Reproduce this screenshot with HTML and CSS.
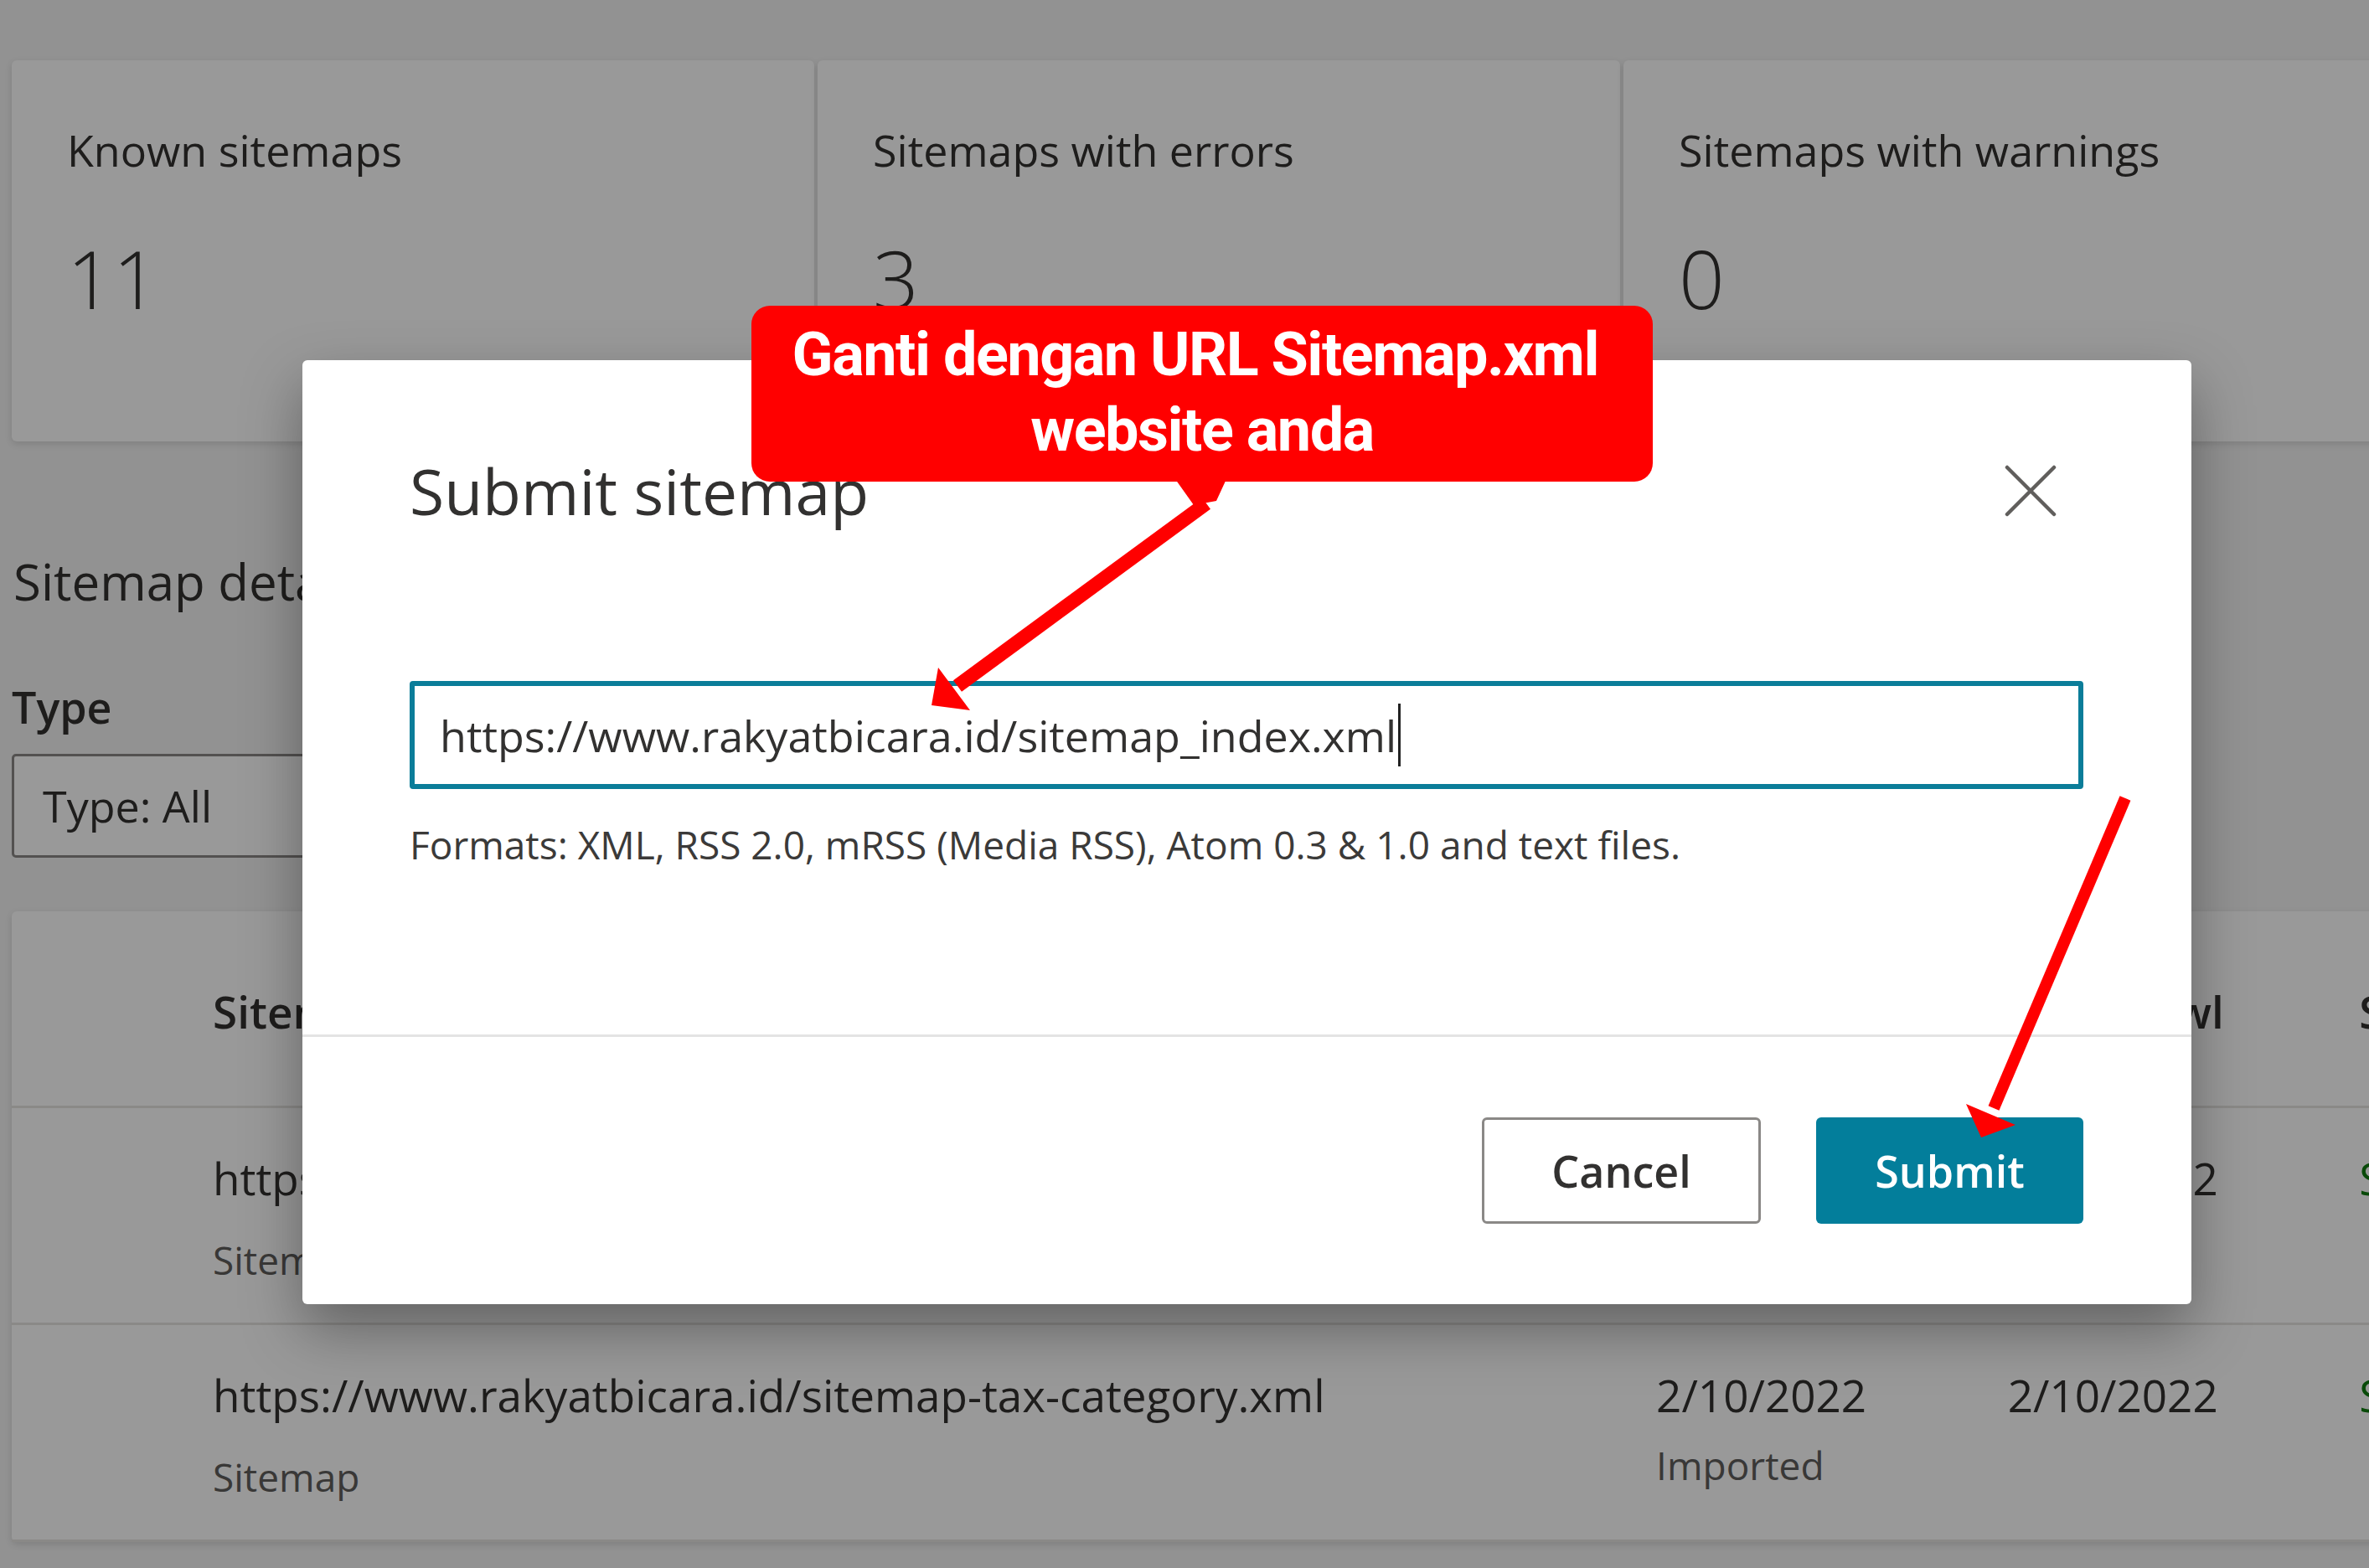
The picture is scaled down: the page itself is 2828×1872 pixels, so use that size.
FILE: index.html
```html
<!DOCTYPE html>
<html lang="en">
<head>
    <meta charset="UTF-8">
    <title>Sitemaps</title>
    <link rel="stylesheet" href="styles.css">
</head>
<body>
    <div class="page">
        <!-- Ringkasan sitemap -->
        <div class="summary">
            <div class="stat-card">
                <div class="stat-label">Known sitemaps</div>
                <div class="stat-value">11</div>
            </div>
            <div class="stat-card">
                <div class="stat-label">Sitemaps with errors</div>
                <div class="stat-value">3</div>
            </div>
            <div class="stat-card">
                <div class="stat-label">Sitemaps with warnings</div>
                <div class="stat-value">0</div>
            </div>
        </div>

        <h2 class="section-title">Sitemap details</h2>

        <div class="filter">
            <div class="filter-label">Type</div>
            <div class="dropdown">Type: All</div>
        </div>

        <!-- Tabel sitemap -->
        <div class="table-card">
            <div class="table-row table-head">
                <div class="col-url">Sitemap</div>
                <div class="col-date">Last submit</div>
                <div class="col-date">Last crawl</div>
                <div class="col-status">Status</div>
            </div>
            <div class="table-row">
                <div class="col-url">
                    <div class="cell-main">https://www.rakyatbicara.id/sitemap_index.xml</div>
                    <div class="cell-sub">Sitemap index</div>
                </div>
                <div class="col-date"><div class="cell-main">2/10/2022</div></div>
                <div class="col-date"><div class="cell-main">2/10/2022</div></div>
                <div class="col-status"><div class="cell-main ok">Success</div></div>
            </div>
            <div class="table-row">
                <div class="col-url">
                    <div class="cell-main">https://www.rakyatbicara.id/sitemap-tax-category.xml</div>
                    <div class="cell-sub">Sitemap</div>
                </div>
                <div class="col-date">
                    <div class="cell-main">2/10/2022</div>
                    <div class="cell-sub small">Imported</div>
                </div>
                <div class="col-date"><div class="cell-main">2/10/2022</div></div>
                <div class="col-status"><div class="cell-main ok">Success</div></div>
            </div>
        </div>
    </div>

    <div class="overlay"></div>

    <!-- Dialog submit sitemap -->
    <div class="dialog">
        <div class="dialog-head">
            <div class="dialog-title">Submit sitemap</div>
            <div class="close-btn">
                <svg width="62" height="62" viewBox="0 0 62 62">
                    <path d="M3 3 L59 59 M59 3 L3 59" stroke="#605e5c" stroke-width="4.5" stroke-linecap="round" fill="none"/>
                </svg>
            </div>
        </div>
        <div class="dialog-body">
            <div class="url-field"><span>https://www.rakyatbicara.id/sitemap_index.xml</span><span class="caret"></span></div>
            <div class="help-text">Formats: XML, RSS 2.0, mRSS (Media RSS), Atom 0.3 &amp; 1.0 and text files.</div>
        </div>
        <div class="dialog-foot">
            <button class="btn btn-cancel">Cancel</button>
            <button class="btn btn-submit">Submit</button>
        </div>
    </div>

    <!-- Catatan merah -->
    <div class="callout">Ganti dengan URL Sitemap.xml&nbsp;<br>website anda</div>

    <svg class="marks" width="2828" height="1872" viewBox="0 0 2828 1872">
        <polygon points="1403,572 1464,572 1452,598 1425,603" fill="#ff0000"/>
        <line x1="1440" y1="601" x2="1143" y2="819" stroke="#ff0000" stroke-width="17"/>
        <polygon points="1112,842 1120,797 1158,848" fill="#ff0000"/>
        <line x1="2537" y1="953" x2="2380" y2="1323" stroke="#ff0000" stroke-width="14"/>
        <polygon points="2365,1358 2347,1318 2406,1343" fill="#ff0000"/>
    </svg>
</body>
</html>
```

FILE: styles.css
```css
/* Halaman dasar */
body {
    margin: 0;
    background-color: #f3f3f3;
    color: #323130;
    font-family: "Open Sans", "Noto Sans", sans-serif;
    overflow: hidden;
    width: 2828px;
    height: 1872px;
    position: relative;
}

.page {
    padding: 72px 0 0 14px;
}

.summary {
    display: flex;
    gap: 4px;
}

.stat-card {
    flex: 0 0 958px;
    height: 455px;
    box-sizing: border-box;
    padding: 72px 0 0 66px;
    background-color: #fff;
    border-radius: 6px;
    box-shadow: 0 3px 8px rgba(0, 0, 0, 0.12);
}

.stat-label {
    font-size: 52px;
    line-height: 70px;
}

.stat-value {
    margin-top: 58px;
    font-size: 96px;
    font-weight: 300;
    line-height: 120px;
}

.section-title {
    margin: 127px 0 0 2px;
    font-size: 60px;
    font-weight: 400;
    line-height: 80px;
}

.filter-label {
    margin-top: 78px;
    font-size: 52px;
    font-weight: 600;
    line-height: 64px;
}

.dropdown {
    margin-top: 24px;
    width: 620px;
    height: 124px;
    box-sizing: border-box;
    padding-left: 34px;
    border: 3px solid #8a8886;
    border-radius: 5px;
    background-color: #fff;
    font-size: 52px;
    line-height: 118px;
}

.table-card {
    margin-top: 64px;
    width: 3200px;
    background-color: #fff;
    border-radius: 6px;
    box-shadow: 0 3px 8px rgba(0, 0, 0, 0.12);
}

.table-row {
    display: flex;
    height: 259px;
    box-sizing: border-box;
    padding: 52px 0 0 240px;
    border-bottom: 3px solid #e6e4e2;
    font-size: 53px;
}

.table-head {
    height: 235px;
    padding-top: 88px;
    font-weight: 600;
    line-height: 64px;
}

.col-url {
    width: 1733px;
}

.col-date {
    width: 422px;
}

.col-status {
    width: 400px;
}

.cell-main {
    line-height: 64px;
}

.cell-main.ok {
    color: #107c10;
}

.cell-sub {
    margin-top: 33px;
    line-height: 64px;
    font-size: 46px;
    color: #605e5c;
}

.cell-sub.small {
    margin-top: 19px;
}

/* Latar gelap di belakang dialog */
.overlay {
    position: absolute;
    inset: 0;
    background-color: rgba(0, 0, 0, 0.4);
}

.dialog {
    position: absolute;
    left: 361px;
    top: 430px;
    width: 2255px;
    height: 1127px;
    display: flex;
    flex-direction: column;
    background-color: #fff;
    border-radius: 6px;
    box-shadow: 0 30px 70px rgba(0, 0, 0, 0.35);
}

.dialog-head {
    display: flex;
    justify-content: space-between;
    align-items: center;
    padding: 116px 129px 0 128px;
}

.dialog-title {
    font-size: 75px;
    line-height: 80px;
    color: #323130;
}

.close-btn {
    width: 62px;
    height: 62px;
    margin-right: 32px;
}

.dialog-body {
    flex: 1;
    padding: 0 129px 0 128px;
}

.url-field {
    margin-top: 187px;
    height: 129px;
    box-sizing: border-box;
    display: flex;
    align-items: center;
    padding-left: 30px;
    border: 6px solid #0b7d99;
    border-radius: 4px;
    font-size: 52px;
    color: #323130;
}

.caret {
    display: inline-block;
    width: 3px;
    height: 75px;
    margin-left: 2px;
    background-color: #222;
}

.help-text {
    margin-top: 36px;
    font-size: 46px;
    line-height: 60px;
    color: #3b3a39;
}

.dialog-foot {
    height: 322px;
    box-sizing: border-box;
    display: flex;
    justify-content: flex-end;
    align-items: center;
    gap: 66px;
    padding-right: 129px;
    border-top: 3px solid #e4e4e4;
}

.btn {
    height: 127px;
    box-sizing: border-box;
    font-family: "Open Sans", "Noto Sans", sans-serif;
    font-size: 52px;
    font-weight: 600;
    border-radius: 6px;
    cursor: pointer;
}

.btn-cancel {
    width: 333px;
    background-color: #fff;
    border: 3px solid #8a8886;
    color: #323130;
}

.btn-submit {
    width: 319px;
    background-color: #037e9b;
    border: none;
    color: #fff;
}

/* Catatan merah dan panah */
.callout {
    position: absolute;
    left: 897px;
    top: 365px;
    width: 1076px;
    height: 210px;
    box-sizing: border-box;
    padding-top: 14px;
    background-color: #ff0000;
    border-radius: 22px;
    color: #fff;
    text-align: center;
    white-space: nowrap;
    font-family: Roboto, "Liberation Sans", sans-serif;
    font-weight: 700;
    font-size: 72px;
    letter-spacing: -1.5px;
    line-height: 90px;
}

.marks {
    position: absolute;
    left: 0;
    top: 0;
    pointer-events: none;
}
```
